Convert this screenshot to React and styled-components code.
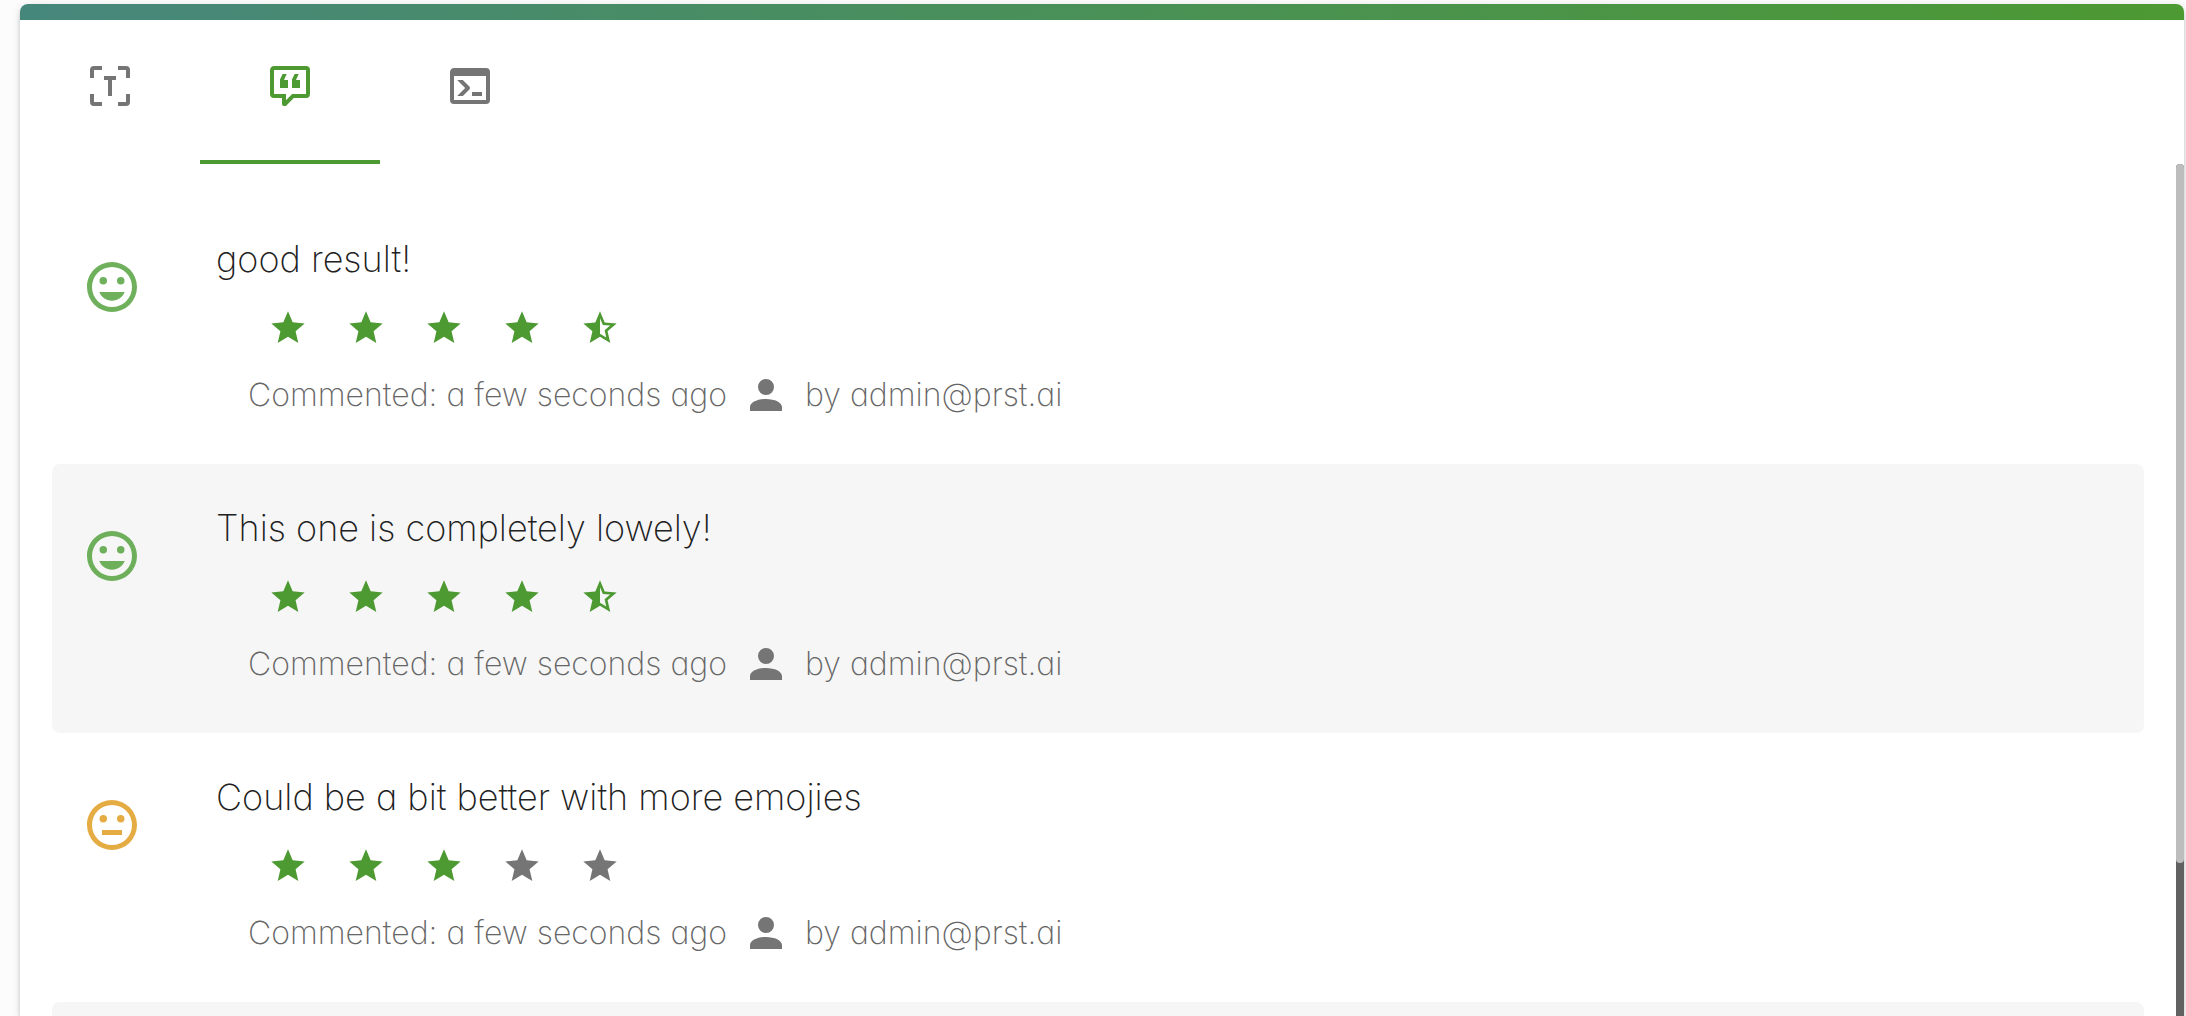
import React, { useState } from 'react';
import styled, { createGlobalStyle } from 'styled-components';

const GlobalStyle = createGlobalStyle`
  *, *::before, *::after { box-sizing: border-box; }
  body {
    margin: 0;
    background: #fcfcfc;
    font-family: Inter, Lato, sans-serif;
    font-feature-settings: "cv11";
  }
`;

const PATHS = {
  textRecognition:
    'M4,8H2V4A2,2 0 0,1 4,2H8V4H4V8M20,8V4H16V2H20A2,2 0 0,1 22,4V8H20M8,20V22H4A2,2 0 0,1 2,20V16H4V20H8M20,16H22V20A2,2 0 0,1 20,22H16V20H20V16M9,7H15V9H13V17H11V9H9V7Z',
  commentQuote:
    'M9,22A1,1 0 0,1 8,21V18H4A2,2 0 0,1 2,16V4C2,2.89 2.9,2 4,2H20A2,2 0 0,1 22,4V16A2,2 0 0,1 20,18H13.9L10.2,21.71C10,21.9 9.75,22 9.5,22H9M10,16V19.08L13.08,16H20V4H4V16H10M16.34,6L15,9H17V13H13V8.75L14.31,6H16.34M10.34,6L9,9H11V13H7V8.75L8.31,6H10.34Z',
  console:
    'M20,19V7H4V19H20M20,3A2,2 0 0,1 22,5V19A2,2 0 0,1 20,21H4A2,2 0 0,1 2,19V5C2,3.89 2.9,3 4,3H20M13,17V15H18V17H13M9.58,13L5.57,9H8.4L11.7,12.3C12.09,12.69 12.09,13.33 11.7,13.72L8.42,17H5.59L9.58,13Z',
  star: 'M12,17.27L18.18,21L16.54,13.97L22,9.24L14.81,8.62L12,2L9.19,8.62L2,9.24L7.45,13.97L5.82,21L12,17.27Z',
  starHalf:
    'M12,15.4V6.1L13.71,10.13L18.09,10.5L14.77,13.39L15.76,17.67M22,9.24L14.81,8.63L12,2L9.19,8.63L2,9.24L7.45,13.97L5.82,21L12,17.27L18.18,21L16.54,13.97L22,9.24Z',
  account:
    'M12,4A4,4 0 0,1 16,8A4,4 0 0,1 12,12A4,4 0 0,1 8,8A4,4 0 0,1 12,4M12,14C16.42,14 20,15.79 20,18V20H4V18C4,15.79 7.58,14 12,14Z',
  happy:
    'M12,17.5C14.33,17.5 16.3,16.04 17.11,14H6.89C7.69,16.04 9.67,17.5 12,17.5M8.5,11A1.5,1.5 0 0,0 10,9.5A1.5,1.5 0 0,0 8.5,8A1.5,1.5 0 0,0 7,9.5A1.5,1.5 0 0,0 8.5,11M15.5,11A1.5,1.5 0 0,0 17,9.5A1.5,1.5 0 0,0 15.5,8A1.5,1.5 0 0,0 14,9.5A1.5,1.5 0 0,0 15.5,11M12,20A8,8 0 0,1 4,12A8,8 0 0,1 12,4A8,8 0 0,1 20,12A8,8 0 0,1 12,20M12,2C6.47,2 2,6.5 2,12A10,10 0 0,0 12,22A10,10 0 0,0 22,12A10,10 0 0,0 12,2Z',
  neutral:
    'M8,14H16V16H8V14M8.5,11A1.5,1.5 0 0,0 10,9.5A1.5,1.5 0 0,0 8.5,8A1.5,1.5 0 0,0 7,9.5A1.5,1.5 0 0,0 8.5,11M15.5,11A1.5,1.5 0 0,0 17,9.5A1.5,1.5 0 0,0 15.5,8A1.5,1.5 0 0,0 14,9.5A1.5,1.5 0 0,0 15.5,11M12,20A8,8 0 0,1 4,12A8,8 0 0,1 12,4A8,8 0 0,1 20,12A8,8 0 0,1 12,20M12,2C6.47,2 2,6.5 2,12A10,10 0 0,0 12,22A10,10 0 0,0 22,12A10,10 0 0,0 12,2Z',
};

const Svg = styled.svg`
  display: block;
  flex: none;
  width: ${(p) => p.$size}px;
  height: ${(p) => p.$size}px;
  fill: ${(p) => p.$color};
`;

const Icon = ({ name, size, color = 'currentColor' }) => (
  <Svg viewBox="0 0 24 24" $size={size} $color={color} aria-hidden="true">
    <path d={PATHS[name]} fillRule="evenodd" />
  </Svg>
);

const Page = styled.main`
  display: flex;
  height: 100vh;
  padding: 4px 2px 0 20px;
  overflow: hidden;
`;

const Card = styled.section`
  flex: 1;
  min-width: 0;
  display: flex;
  flex-direction: column;
  background: #fff;
  border-radius: 8px 8px 0 0;
  box-shadow: 0 6px 2px -4px rgba(0, 0, 0, 0.2), 0 4px 4px rgba(0, 0, 0, 0.14),
    0 2px 10px rgba(0, 0, 0, 0.12);
`;

const Accent = styled.div`
  flex: none;
  height: 16px;
  border-radius: 8px 8px 0 0;
  background: linear-gradient(90deg, #46877c, #4d9932);
`;

const Tabs = styled.div`
  flex: none;
  display: flex;
  height: 144px;
`;

const Tab = styled.button`
  display: flex;
  justify-content: center;
  align-items: flex-start;
  width: 180px;
  padding: 42px 0 0;
  border: 0;
  border-bottom: 4px solid ${(p) => (p.$active ? '#4d9932' : 'transparent')};
  background: none;
  color: ${(p) => (p.$active ? '#4d9932' : '#757575')};
  cursor: pointer;
`;

const Body = styled.div`
  flex: 1;
  min-height: 0;
  display: flex;
`;

const List = styled.ul`
  flex: 1;
  min-width: 0;
  margin: 0;
  padding: 31px 32px 0;
  list-style: none;
  overflow-y: auto;
  scrollbar-width: none;
`;

const Track = styled.div`
  flex: none;
  width: 8px;
  border-radius: 4px 4px 0 0;
  background: #616161;
`;

const Thumb = styled.div`
  height: 82%;
  border-radius: 4px;
  background: #bdbdbd;
`;

const Row = styled.li`
  display: flex;
  gap: 74px;
  min-height: 269px;
  padding: 40px 30px 45px;
  border-radius: 8px;
  background: ${(p) => (p.$shaded ? '#f6f6f6' : 'transparent')};
`;

const Mood = styled.div`
  padding-top: 22px;
  opacity: 0.85;
`;

const Title = styled.h3`
  margin: 0;
  font-size: 36px;
  font-weight: 200;
  line-height: 48px;
  color: #212121;
`;

const Stars = styled.div`
  display: flex;
  gap: 38px;
  padding: 25px 0 23px 52px;
`;

const Meta = styled.div`
  display: flex;
  align-items: center;
  gap: 15px;
  padding-left: 32px;
  font-size: 32px;
  font-weight: 200;
  line-height: 48px;
  color: #666;
`;

const TABS = [
  { icon: 'textRecognition', label: 'Text' },
  { icon: 'commentQuote', label: 'Comments' },
  { icon: 'console', label: 'Console' },
];

const COMMENTS = [
  { text: 'good result!', mood: 'happy', rating: 4.5 },
  { text: 'This one is completely lowely!', mood: 'happy', rating: 4.5 },
  { text: 'Could be a bit better with more emojies', mood: 'neutral', rating: 3 },
];

const MOOD_COLORS = { happy: '#57a340', neutral: '#e29e24' };

const Rating = ({ value }) => (
  <Stars role="img" aria-label={`${value} / 5`}>
    {[1, 2, 3, 4, 5].map((n) => (
      <Icon
        key={n}
        size={40}
        name={value === n - 0.5 ? 'starHalf' : 'star'}
        color={value > n - 1 ? '#4d9932' : '#757575'}
      />
    ))}
  </Stars>
);

const Comment = ({ text, mood, rating, shaded }) => (
  <Row $shaded={shaded}>
    <Mood>
      <Icon name={mood} size={60} color={MOOD_COLORS[mood]} />
    </Mood>
    <div>
      <Title>{text}</Title>
      <Rating value={rating} />
      <Meta>
        <span>Commented: a few seconds ago</span>
        <Icon name="account" size={48} color="#757575" />
        <span>by admin@prst.ai</span>
      </Meta>
    </div>
  </Row>
);

export default function App() {
  const [active, setActive] = useState(1);
  return (
    <Page>
      <GlobalStyle />
      <Card>
        <Accent />
        <Tabs role="tablist">
          {TABS.map((t, i) => (
            <Tab
              key={t.icon}
              role="tab"
              aria-label={t.label}
              aria-selected={i === active}
              $active={i === active}
              onClick={() => setActive(i)}
            >
              <Icon name={t.icon} size={48} />
            </Tab>
          ))}
        </Tabs>
        <Body>
          <List>
            {COMMENTS.map((c, i) => (
              <Comment key={c.text} {...c} shaded={i % 2 === 1} />
            ))}
            <Row $shaded />
          </List>
          <Track>
            <Thumb />
          </Track>
        </Body>
      </Card>
    </Page>
  );
}
